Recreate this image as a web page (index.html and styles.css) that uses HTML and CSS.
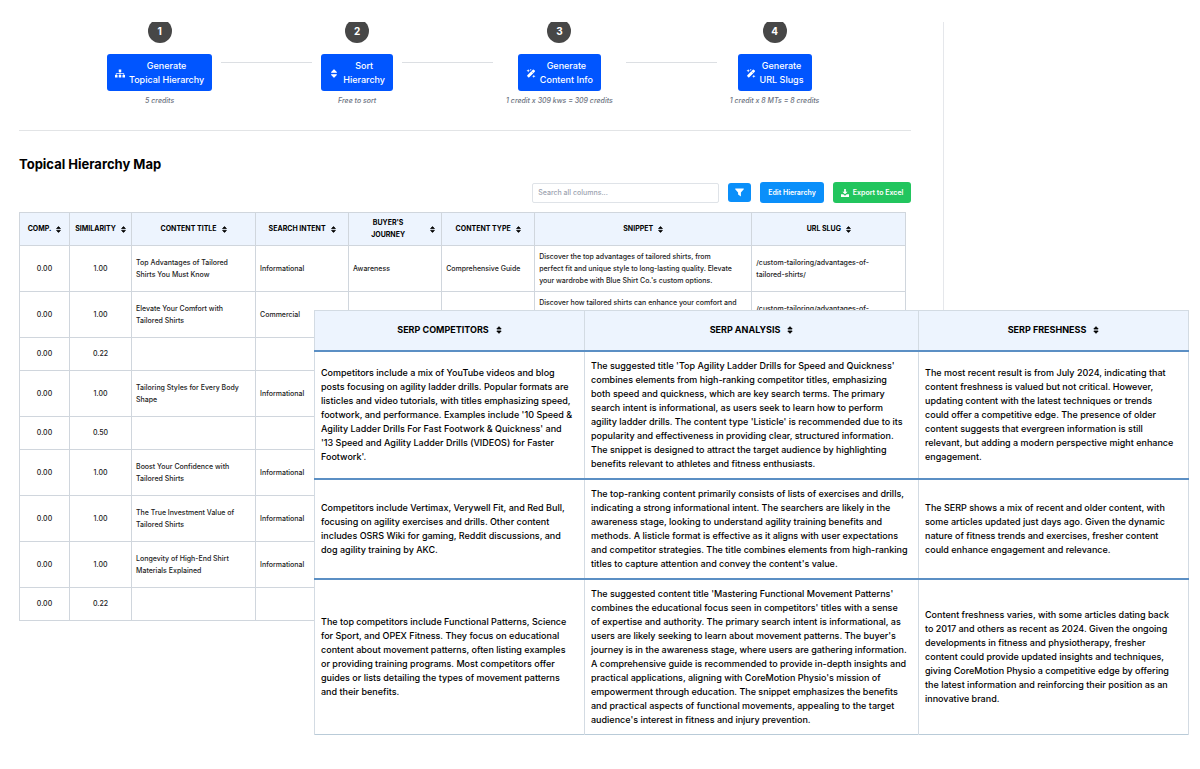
FILE: index.html
```html
<!DOCTYPE html>
<html lang="en">
<head>
<meta charset="utf-8">
<title>Topical Hierarchy Map</title>
<link rel="stylesheet" href="styles.css">
</head>
<body>
<svg class="sprite" aria-hidden="true">
  <symbol id="sort" viewBox="0 0 10 14"><path d="M5 1.2 8.800 5.200H1.200zM5 12.800 1.200 8.800h7.600z" stroke="currentColor" stroke-width="1.6" stroke-linejoin="round"/></symbol>
  <symbol id="sitemap" viewBox="0 0 20 16"><path d="M7.5 0h5v5h-5zM0 11h5v5H0zM7.5 11h5v5h-5zM15 11h5v5h-5z"/><path d="M10 5v6M2.5 11V8h15v3" fill="none" stroke="currentColor" stroke-width="1.5"/></symbol>
  <symbol id="wand" viewBox="0 0 16 16"><path d="M12.2 2.2 13.800 3.800 4 13.600 2.400 12z" stroke="currentColor" stroke-width="2.6" stroke-linejoin="round"/><path d="m9.300 4.700 2 2" stroke="#0055ff" stroke-width="1"/><path d="M3 0l.8 2.200L6 3l-2.200.8L3 6l-.8-2.200L0 3l2.200-.8zM13 10l.8 2.200L16 13l-2.200.8L13 16l-.8-2.200L10 13l2.200-.8zM7.500 0l.5 1 1 .5-1 .5-.5 1-.5-1-1-.5 1-.5z"/></symbol>
  <symbol id="filter" viewBox="0 0 16 16"><path d="M1 1h14a.8.8 0 0 1 .6 1.300L10.500 8v7.200L5.500 11.500V8L.4 2.300A.8.8 0 0 1 1 1z"/></symbol>
  <symbol id="download" viewBox="0 0 16 16"><path d="M6.300 0h3.400v5.500h3.500L8 10.700 2.800 5.500h3.500z"/><path d="M0 10.500h4.500L8 13.500l3.500-3H16V16H0z"/></symbol>
</svg>

<main class="panel">
  <section class="steps" aria-label="Steps">
    <div class="step">
      <span class="step-number">1</span>
      <button type="button" class="step-button"><svg class="icon-wide"><use href="#sitemap"/></svg><span>Generate<br>Topical Hierarchy</span></button>
      <span class="step-note">5 credits</span>
    </div>
    <span class="connector"></span>
    <div class="step">
      <span class="step-number">2</span>
      <button type="button" class="step-button"><svg class="icon-wide"><use href="#sort"/></svg><span>Sort<br>Hierarchy</span></button>
      <span class="step-note">Free to sort</span>
    </div>
    <span class="connector"></span>
    <div class="step">
      <span class="step-number">3</span>
      <button type="button" class="step-button"><svg class="icon-wide"><use href="#wand"/></svg><span>Generate<br>Content Info</span></button>
      <span class="step-note">1 credit x 309 kws = 309 credits</span>
    </div>
    <span class="connector"></span>
    <div class="step">
      <span class="step-number">4</span>
      <button type="button" class="step-button"><svg class="icon-wide"><use href="#wand"/></svg><span>Generate<br>URL Slugs</span></button>
      <span class="step-note">1 credit x 8 MTs = 8 credits</span>
    </div>
  </section>

  <h1 class="title">Topical Hierarchy Map</h1>

  <div class="toolbar">
    <input class="search" type="text" placeholder="Search all columns..." aria-label="Search all columns">
    <button type="button" class="tool tool-filter" aria-label="Filter"><svg class="icon"><use href="#filter"/></svg></button>
    <button type="button" class="tool">Edit Hierarchy</button>
    <button type="button" class="tool tool-export"><svg class="icon-small"><use href="#download"/></svg>Export to Excel</button>
  </div>

  <table class="map">
    <colgroup><col class="c-comp"><col class="c-sim"><col class="c-title"><col class="c-mid"><col class="c-mid"><col class="c-mid"><col class="c-snippet"><col class="c-slug"></colgroup>
    <thead>
      <tr>
        <th><span class="head"><span>Comp.</span><svg class="sort"><use href="#sort"/></svg></span></th>
        <th><span class="head"><span>Similarity</span><svg class="sort"><use href="#sort"/></svg></span></th>
        <th><span class="head"><span>Content Title</span><svg class="sort"><use href="#sort"/></svg></span></th>
        <th><span class="head"><span>Search Intent</span><svg class="sort"><use href="#sort"/></svg></span></th>
        <th><span class="head"><span class="head-wide">Buyer's<br>Journey</span><svg class="sort"><use href="#sort"/></svg></span></th>
        <th><span class="head"><span>Content Type</span><svg class="sort"><use href="#sort"/></svg></span></th>
        <th><span class="head"><span>Snippet</span><svg class="sort"><use href="#sort"/></svg></span></th>
        <th><span class="head"><span>URL Slug</span><svg class="sort"><use href="#sort"/></svg></span></th>
      </tr>
    </thead>
    <tbody>
      <tr class="tall"><td class="num">0.00</td><td class="num">1.00</td><td>Top Advantages of Tailored<br>Shirts You Must Know</td><td>Informational</td><td>Awareness</td><td>Comprehensive Guide</td><td>Discover the top advantages of tailored shirts, from<br>perfect fit and unique style to long-lasting quality. Elevate<br>your wardrobe with Blue Shirt Co.'s custom options.</td><td>/custom-tailoring/advantages-of-<br>tailored-shirts/</td></tr>
      <tr class="tall"><td class="num">0.00</td><td class="num">1.00</td><td>Elevate Your Comfort with Tailored Shirts</td><td>Commercial</td><td></td><td></td><td class="top">Discover how tailored shirts can enhance your comfort and</td><td>/custom-tailoring/advantages-of-<br>tailored-shirts/</td></tr>
      <tr><td class="num">0.00</td><td class="num">0.22</td><td></td><td></td><td></td><td></td><td></td><td></td></tr>
      <tr class="tall"><td class="num">0.00</td><td class="num">1.00</td><td>Tailoring Styles for Every Body Shape</td><td>Informational</td><td></td><td></td><td></td><td></td></tr>
      <tr><td class="num">0.00</td><td class="num">0.50</td><td></td><td></td><td></td><td></td><td></td><td></td></tr>
      <tr class="tall"><td class="num">0.00</td><td class="num">1.00</td><td>Boost Your Confidence with Tailored Shirts</td><td>Informational</td><td></td><td></td><td></td><td></td></tr>
      <tr class="tall"><td class="num">0.00</td><td class="num">1.00</td><td>The True Investment Value of Tailored Shirts</td><td>Informational</td><td></td><td></td><td></td><td></td></tr>
      <tr class="tall"><td class="num">0.00</td><td class="num">1.00</td><td>Longevity of High-End Shirt Materials Explained</td><td>Informational</td><td></td><td></td><td></td><td></td></tr>
      <tr><td class="num">0.00</td><td class="num">0.22</td><td></td><td></td><td></td><td></td><td></td><td></td></tr>
    </tbody>
  </table>
</main>

<section class="overlay" aria-label="SERP details">
  <table class="serp">
    <colgroup><col class="c-competitors"><col class="c-analysis"><col class="c-freshness"></colgroup>
    <thead>
      <tr>
        <th><span class="head"><span>SERP Competitors</span><svg class="sort"><use href="#sort"/></svg></span></th>
        <th><span class="head"><span>SERP Analysis</span><svg class="sort"><use href="#sort"/></svg></span></th>
        <th><span class="head"><span>SERP Freshness</span><svg class="sort"><use href="#sort"/></svg></span></th>
      </tr>
    </thead>
    <tbody>
      <tr>
        <td>Competitors include a mix of YouTube videos and blog<br>posts focusing on agility ladder drills. Popular formats are<br>listicles and video tutorials, with titles emphasizing speed,<br>footwork, and performance. Examples include '10 Speed &amp;<br>Agility Ladder Drills For Fast Footwork &amp; Quickness' and<br>'13 Speed and Agility Ladder Drills (VIDEOS) for Faster<br>Footwork'.</td>
        <td>The suggested title 'Top Agility Ladder Drills for Speed and Quickness' combines elements from high-ranking competitor titles, emphasizing<br>both speed and quickness, which are key search terms. The primary<br>search intent is informational, as users seek to learn how to perform<br>agility ladder drills. The content type 'Listicle' is recommended due to its popularity and effectiveness in providing clear, structured information.<br>The snippet is designed to attract the target audience by highlighting<br>benefits relevant to athletes and fitness enthusiasts.</td>
        <td>The most recent result is from July 2024, indicating that content freshness is valued but not critical. However,<br>updating content with the latest techniques or trends<br>could offer a competitive edge. The presence of older<br>content suggests that evergreen information is still<br>relevant, but adding a modern perspective might enhance<br>engagement.</td>
      </tr>
      <tr>
        <td>Competitors include Vertimax, Verywell Fit, and Red Bull, focusing on agility exercises and drills. Other content<br>includes OSRS Wiki for gaming, Reddit discussions, and<br>dog agility training by AKC.</td>
        <td>The top-ranking content primarily consists of lists of exercises and drills, indicating a strong informational intent. The searchers are likely in the awareness stage, looking to understand agility training benefits and methods. A listicle format is effective as it aligns with user expectations and competitor strategies. The title combines elements from high-ranking titles to capture attention and convey the content's value.</td>
        <td>The SERP shows a mix of recent and older content, with some articles updated just days ago. Given the dynamic nature of fitness trends and exercises, fresher content<br>could enhance engagement and relevance.</td>
      </tr>
      <tr>
        <td>The top competitors include Functional Patterns, Science<br>for Sport, and OPEX Fitness. They focus on educational<br>content about movement patterns, often listing examples<br>or providing training programs. Most competitors offer<br>guides or lists detailing the types of movement patterns<br>and their benefits.</td>
        <td>The suggested content title 'Mastering Functional Movement Patterns' combines the educational focus seen in competitors' titles with a sense<br>of expertise and authority. The primary search intent is informational, as<br>users are likely seeking to learn about movement patterns. The buyer's journey is in the awareness stage, where users are gathering information.<br>A comprehensive guide is recommended to provide in-depth insights and practical applications, aligning with CoreMotion Physio's mission of<br>empowerment through education. The snippet emphasizes the benefits<br>and practical aspects of functional movements, appealing to the target<br>audience's interest in fitness and injury prevention.</td>
        <td>Content freshness varies, with some articles dating back<br>to 2017 and others as recent as 2024. Given the ongoing<br>developments in fitness and physiotherapy, fresher<br>content could provide updated insights and techniques,<br>giving CoreMotion Physio a competitive edge by offering<br>the latest information and reinforcing their position as an<br>innovative brand.</td>
      </tr>
    </tbody>
  </table>
</section>
</body>
</html>
```
FILE: styles.css
```css
* { box-sizing: border-box; }

body {
  position: relative;
  min-height: 100vh;
  margin: 0;
  padding: 22px 0 32px;
  background: #fff;
  color: #222;
  font-family: Inter, "Liberation Sans", sans-serif;
  font-size: 7px;
  font-weight: 500;
  line-height: 12px;
}

svg { fill: currentColor; flex: none; }
button, input { font: inherit; }

.sprite { position: absolute; width: 0; height: 0; }

.panel {
  width: 78.7%;
  padding: 0 32px 0 19px;
  border-right: 1px solid #e5e7eb;
  overflow: hidden;
}

/* Steps */
.steps {
  display: flex;
  gap: 9px;
  margin-top: -3px;
  padding: 0 88px 23px;
  border-bottom: 1px solid #e2e4e6;
}

.step { display: flex; flex-direction: column; align-items: center; }

.step-number {
  width: 24px;
  height: 24px;
  margin-bottom: 11px;
  border-radius: 50%;
  background: #474747;
  color: #fff;
  font-size: 10px;
  font-weight: 700;
  line-height: 24px;
  text-align: center;
}

.step-button {
  display: flex;
  align-items: center;
  gap: 4px;
  padding: 5px 8px 4px;
  border: 0;
  border-radius: 3px;
  background: #0055ff;
  color: #fff;
  font-size: 9px;
  line-height: 14px;
  white-space: nowrap;
}

.icon-wide { width: 10px; height: 9px; }

.step-note {
  margin-top: 4px;
  padding: 0 4px;
  color: #6b7280;
  font-style: italic;
  white-space: nowrap;
}

.connector {
  flex: 1;
  height: 1px;
  margin-top: 43px;
  background: #dcdfe3;
}

/* Heading and toolbar */
.title {
  margin: 23px 0 8px;
  color: #000;
  font-size: 13px;
  font-weight: 700;
  line-height: 20px;
}

.toolbar {
  display: flex;
  align-items: center;
  justify-content: flex-end;
  gap: 9px;
  margin-bottom: 9px;
}

.search {
  width: 187px;
  height: 20px;
  padding: 0 5px;
  border: 1px solid #dfe3e8;
  border-radius: 2px;
  color: #111;
}
.search::placeholder { color: #9ca3af; }

.tool {
  display: flex;
  align-items: center;
  gap: 4px;
  height: 21px;
  padding: 0 8px;
  border: 0;
  border-radius: 3px;
  background: #0a8ffa;
  color: #fff;
  font-weight: 600;
  white-space: nowrap;
}
.tool-filter { height: 19px; padding: 0 7px; }
.tool-export { background: #22c55e; }
.icon { width: 9px; height: 9px; }
.icon-small { width: 8px; height: 8px; }

/* Tables */
table { border-collapse: collapse; table-layout: fixed; width: 100%; }
th, td { font-weight: 500; text-align: left; vertical-align: middle; }
th { background: #edf4fe; color: #000; text-transform: uppercase; }

.head {
  display: flex;
  align-items: center;
  justify-content: center;
  gap: 5px;
  font-weight: 700;
  text-align: center;
  white-space: nowrap;
}
.head-wide { flex: 1; }
.sort { width: 5px; height: 7px; }

.map { width: calc(100% - 5px); margin-bottom: 2px; }
.map th, .map td { height: 33px; padding: 0 4px; border: 1px solid #d0d6dd; }
.map th { padding: 0 2px; }
.map th:nth-child(5) { padding-right: 6px; }
.map .tall td { height: 46px; }
.map .num { padding: 0; text-align: center; }
.map .top { padding-top: 5px; vertical-align: top; }
.c-comp { width: 50px; }
.c-sim { width: 62px; }
.c-title { width: 124px; }
.c-mid { width: 93px; }
.c-snippet { width: 217px; }
.c-slug { width: 154px; }

/* Detail table laid over the map */
.overlay {
  position: absolute;
  top: 310px;
  right: 12px;
  left: 314px;
  background: #fff;
}
.serp { color: #000; font-size: 9px; line-height: 14px; border-bottom: 1px solid #b9cbd8; }
.serp th, .serp td { padding: 7px 6px; border-right: 1px solid #d3dbe3; border-left: 1px solid #d3dbe3; }
.serp td { padding-right: 2px; }
.serp th { height: 40px; border-top: 1px solid #d3dbe3; }
.serp tbody tr { border-top: 2px solid #5b8fc4; }
.serp .head { gap: 7px; }
.serp .sort { width: 6px; height: 8px; }
.c-competitors { width: 270px; }
.c-analysis { width: 334px; }
.c-freshness { width: 270px; }
```
